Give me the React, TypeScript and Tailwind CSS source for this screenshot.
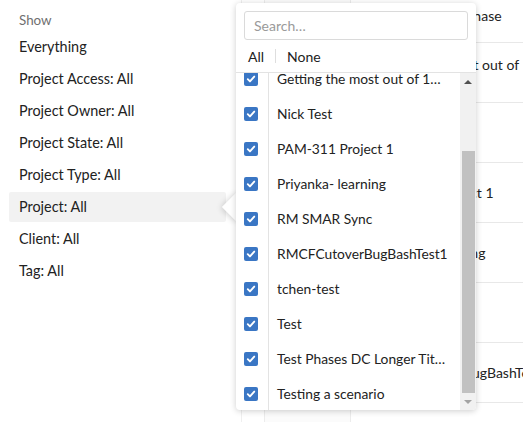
import React from 'react';

const filters = [
  'Everything',
  'Project Access: All',
  'Project Owner: All',
  'Project State: All',
  'Project Type: All',
  'Project: All',
  'Client: All',
  'Tag: All',
];

const projects = [
  'Getting the most out of 1Password',
  'Nick Test',
  'PAM-311 Project 1',
  'Priyanka- learning',
  'RM SMAR Sync',
  'RMCFCutoverBugBashTest1',
  'tchen-test',
  'Test',
  'Test Phases DC Longer Title For Testing',
  'Testing a scenario',
];

const tableRows = [
  'Nick Test',
  'PAM-311 Project 1',
  'Priyanka- learning',
  'RM SMAR Sync',
  'RMCFCutoverBugBashTest1',
];

const Check = () => (
  <span className="flex size-[14px] items-center justify-center rounded-[2px] bg-[#3a76c4]">
    <svg viewBox="0 0 14 14" className="size-[12px]" fill="none">
      <path d="M3.2 7.2 L5.8 9.8 L10.8 4.2" stroke="white" strokeWidth="2.2" strokeLinecap="round" strokeLinejoin="round" />
    </svg>
  </span>
);

export default function App() {
  return (
    <div className="relative flex h-[422px] w-[523px] overflow-hidden bg-white font-['Lato','Liberation_Sans',sans-serif] text-[14px] text-[#222]">
      {/* Left filter list */}
      <div className="w-[236px] shrink-0 px-[9px] pt-[10px] text-[14.4px]">
        <div className="mb-[2px] flex h-[20px] items-center px-[10px] text-[13.4px] text-[#6f6f6f]">Show</div>
        {filters.map((f) => (
          <div
            key={f}
            className={`mb-[2px] flex h-[30px] items-center rounded-[2px] px-[10px] ${f === 'Project: All' ? 'mr-[1px] bg-[#f2f2f2]' : ''}`}
          >
            {f}
          </div>
        ))}
      </div>

      {/* Table behind the popover */}
      <div className="flex flex-1">
        <div className="ml-[5px] w-[23px] shrink-0 border-l border-[#efefef]" />
        <div className="w-[87px] shrink-0 border-x border-[#ececec] bg-[#fbfbfb]" />
        <div className="flex-1 pl-[24px]">
          <div className="flex h-[43px] items-start border-b border-[#e8e8e8] pt-[5px] pl-[90px] whitespace-nowrap">
            Phase
          </div>
          <div className="flex h-[60px] flex-col justify-center border-b border-[#e8e8e8] leading-[16px] whitespace-nowrap">
            <span>Getting the most out of</span>
            <span className="invisible">1Password</span>
          </div>
          {tableRows.map((r) => (
            <div key={r} className="flex h-[60px] items-center border-b border-[#e8e8e8] whitespace-nowrap">
              {r}
            </div>
          ))}
        </div>
      </div>

      {/* Popover */}
      <div className="absolute left-[236px] top-[3px] h-[407px] w-[240px]">
        <div className="absolute left-[-10px] top-[194px] size-[20px] rotate-45 bg-white shadow-[0_1px_6px_rgba(0,0,0,0.2)]" />
        <div className="relative flex h-full flex-col rounded-[4px] bg-white shadow-[0_1px_6px_rgba(0,0,0,0.2)]">
          <div className="px-[8px] pt-[8px]">
            <div className="flex h-[29px] items-center rounded-[3px] border border-[#dadada] px-[9px] text-[#9a9a9a]">
              Search…
            </div>
          </div>
          <div className="flex h-[33px] items-center border-b border-[#e3e3e3] pl-[12px]">
            <span>All</span>
            <span className="mx-[11px] h-[14px] w-px bg-[#dedede]" />
            <span>None</span>
          </div>
          <div className="flex min-h-0 flex-1 overflow-hidden rounded-b-[4px]">
            <div className="relative min-w-0 flex-1 overflow-hidden">
              <div className="absolute left-[32px] top-0 h-full w-px bg-[#e3e3e3]" />
              <div className="-mt-[11px]">
                {projects.map((p) => (
                  <div key={p} className="flex h-[35px] items-center">
                    <div className="flex w-[32px] shrink-0 justify-center pb-[2px] pr-[3px]">
                      <Check />
                    </div>
                    <div className="min-w-0 flex-1 truncate pl-[9px] pr-[12px] text-[13.8px]">{p}</div>
                  </div>
                ))}
              </div>
            </div>
            {/* Scrollbar */}
            <div className="flex w-[16px] shrink-0 flex-col items-center bg-[#f1f1f1]">
              <div className="flex h-[17px] items-center justify-center">
                <span className="h-0 w-0 border-x-[4px] border-b-[4px] border-x-transparent border-b-[#505050]" />
              </div>
              <div className="mt-[61px] h-[242px] w-[13px] bg-[#c1c1c1]" />
              <div className="flex flex-1 items-center justify-center">
                <span className="h-0 w-0 border-x-[4px] border-t-[4px] border-x-transparent border-t-[#a3a3a3]" />
              </div>
            </div>
          </div>
        </div>
      </div>
    </div>
  );
}
